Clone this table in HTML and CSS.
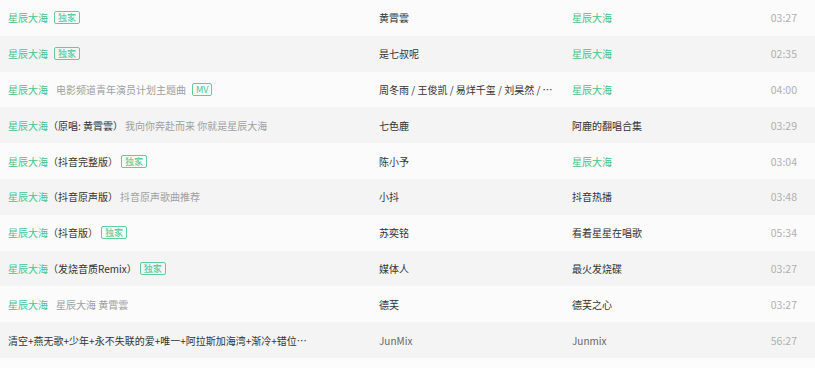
FILE: index.html
```html
<!DOCTYPE html>
<html lang="zh-CN">
<head>
<meta charset="utf-8">
<title>星辰大海</title>
<link rel="stylesheet" href="styles.css">
</head>
<body>
<div class="list">
  <div class="row">
    <div class="c-title"><span class="name">星辰大海</span><span class="tag">独家</span></div>
    <div class="c-artist">黄霄雲</div>
    <div class="c-album green">星辰大海</div>
    <div class="c-time">03:27</div>
  </div>
  <div class="row">
    <div class="c-title"><span class="name">星辰大海</span><span class="tag">独家</span></div>
    <div class="c-artist">是七叔呢</div>
    <div class="c-album green">星辰大海</div>
    <div class="c-time">02:35</div>
  </div>
  <div class="row">
    <div class="c-title"><span class="name">星辰大海</span><span class="sub">电影频道青年演员计划主题曲</span><span class="tag">MV</span></div>
    <div class="c-artist">周冬雨 / 王俊凯 / 易烊千玺 / 刘昊然 / 张子枫</div>
    <div class="c-album green">星辰大海</div>
    <div class="c-time">04:00</div>
  </div>
  <div class="row">
    <div class="c-title"><span class="name">星辰大海</span><span class="paren">（原唱: 黄霄雲）</span><span class="sub">我向你奔赴而来 你就是星辰大海</span></div>
    <div class="c-artist">七色鹿</div>
    <div class="c-album">阿鹿的翻唱合集</div>
    <div class="c-time">03:29</div>
  </div>
  <div class="row">
    <div class="c-title"><span class="name">星辰大海</span><span class="paren">（抖音完整版）</span><span class="tag">独家</span></div>
    <div class="c-artist">陈小予</div>
    <div class="c-album green">星辰大海</div>
    <div class="c-time">03:04</div>
  </div>
  <div class="row">
    <div class="c-title"><span class="name">星辰大海</span><span class="paren">（抖音原声版）</span><span class="sub">抖音原声歌曲推荐</span></div>
    <div class="c-artist">小抖</div>
    <div class="c-album">抖音热播</div>
    <div class="c-time">03:48</div>
  </div>
  <div class="row">
    <div class="c-title"><span class="name">星辰大海</span><span class="paren">（抖音版）</span><span class="tag">独家</span></div>
    <div class="c-artist">苏奕铭</div>
    <div class="c-album">看着星星在唱歌</div>
    <div class="c-time">05:34</div>
  </div>
  <div class="row">
    <div class="c-title"><span class="name">星辰大海</span><span class="paren">（发烧音质Remix）</span><span class="tag">独家</span></div>
    <div class="c-artist">媒体人</div>
    <div class="c-album">最火发烧碟</div>
    <div class="c-time">03:27</div>
  </div>
  <div class="row">
    <div class="c-title"><span class="name">星辰大海</span><span class="sub">星辰大海 黄霄雲</span></div>
    <div class="c-artist">德芙</div>
    <div class="c-album">德芙之心</div>
    <div class="c-time">03:27</div>
  </div>
  <div class="row">
    <div class="c-title"><span class="plain">清空+燕无歌+少年+永不失联的爱+唯一+阿拉斯加海湾+渐冷+错位时空+我们的爱</span></div>
    <div class="c-artist light">JunMix</div>
    <div class="c-album light">Junmix</div>
    <div class="c-time">56:27</div>
  </div>
</div>
</body>
</html>
```

FILE: styles.css
```css
html, body {
  margin: 0;
  padding: 0;
  background: #fcfcfc;
}
body {
  font-family: "Noto Sans CJK SC", "Noto Sans", sans-serif;
  font-size: 10px;
  color: #333;
  width: 815px;
  height: 368px;
  overflow: hidden;
}
.list {
  display: flex;
  flex-direction: column;
}
.row {
  display: grid;
  grid-template-columns: 371px 193px 1fr 60px;
  align-items: center;
  height: 35.8px;
  padding: 0 18px 0 8px;
  background: #fbfbfb;
}
.row:nth-child(even) {
  background: #f4f4f4;
}
.c-title {
  display: flex;
  align-items: center;
  white-space: nowrap;
  overflow: hidden;
  max-width: 302px;
}
.name {
  color: #45c48c;
}
.paren {
  color: #333;
}
.sub {
  color: #a0a0a0;
  margin-left: 8px;
}
.paren + .sub {
  margin-left: 2px;
}
.plain {
  color: #333;
  overflow: hidden;
  text-overflow: ellipsis;
  white-space: nowrap;
}
.tag {
  display: inline-flex;
  align-items: center;
  justify-content: center;
  height: 11px;
  padding: 0 3px;
  margin-left: 6px;
  border: 1px solid #62cc9c;
  border-radius: 2px;
  color: #45c48c;
  font-size: 9px;
  line-height: 11px;
}
.paren + .tag {
  margin-left: 3px;
}
.c-artist {
  white-space: nowrap;
  overflow: hidden;
  text-overflow: ellipsis;
  max-width: 180px;
  color: #333;
}
.c-album {
  white-space: nowrap;
  color: #333;
}
.green {
  color: #45c48c;
}
.light {
  color: #666;
}
.c-time {
  text-align: right;
  color: #b0b0b0;
  font-size: 10.5px;
}
```
